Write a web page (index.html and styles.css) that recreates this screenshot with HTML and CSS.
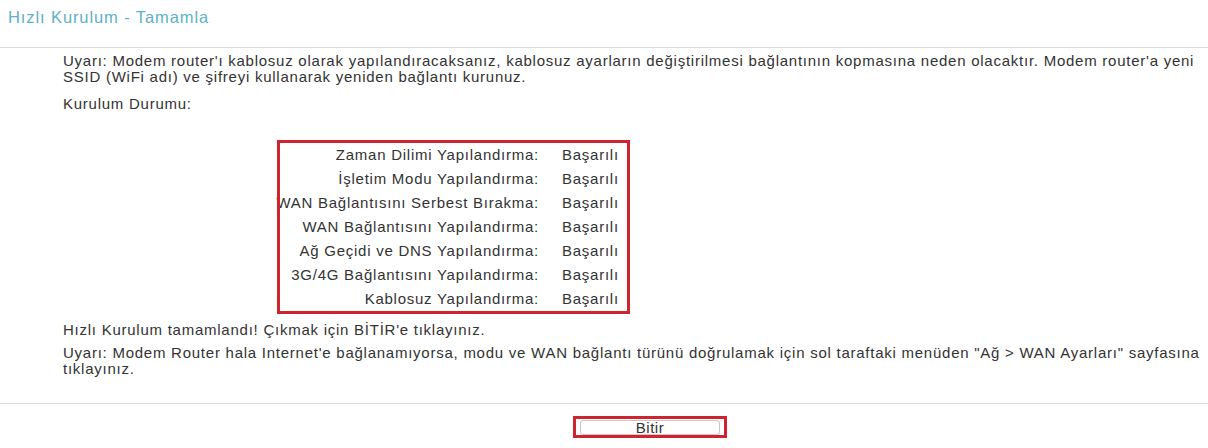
FILE: index.html
```html
<!DOCTYPE html>
<html lang="tr">
<head>
    <meta charset="UTF-8">
    <meta name="viewport" content="width=device-width, initial-scale=1.0">
    <title>Hızlı Kurulum - Tamamla</title>
    <link rel="stylesheet" href="styles.css">
</head>
<body>
    <div class="page">
        <div class="page-title">Hızlı Kurulum - Tamamla</div>

        <div class="content">
            <p class="note">Uyarı: Modem router'ı kablosuz olarak yapılandıracaksanız, kablosuz ayarların değiştirilmesi bağlantının kopmasına neden olacaktır. Modem router'a yeni SSID (WiFi adı) ve şifreyi kullanarak yeniden bağlantı kurunuz.</p>

            <p class="section-label">Kurulum Durumu:</p>

            <div class="highlight status-box">
                <div class="status-row">
                    <span class="status-name">Zaman Dilimi Yapılandırma:</span>
                    <span class="status-value">Başarılı</span>
                </div>
                <div class="status-row">
                    <span class="status-name">İşletim Modu Yapılandırma:</span>
                    <span class="status-value">Başarılı</span>
                </div>
                <div class="status-row">
                    <span class="status-name">WAN Bağlantısını Serbest Bırakma:</span>
                    <span class="status-value">Başarılı</span>
                </div>
                <div class="status-row">
                    <span class="status-name">WAN Bağlantısını Yapılandırma:</span>
                    <span class="status-value">Başarılı</span>
                </div>
                <div class="status-row">
                    <span class="status-name">Ağ Geçidi ve DNS Yapılandırma:</span>
                    <span class="status-value">Başarılı</span>
                </div>
                <div class="status-row">
                    <span class="status-name">3G/4G Bağlantısını Yapılandırma:</span>
                    <span class="status-value">Başarılı</span>
                </div>
                <div class="status-row">
                    <span class="status-name">Kablosuz Yapılandırma:</span>
                    <span class="status-value">Başarılı</span>
                </div>
            </div>

            <p class="done">Hızlı Kurulum tamamlandı! Çıkmak için BİTİR'e tıklayınız.</p>
            <p class="note">Uyarı: Modem Router hala Internet'e bağlanamıyorsa, modu ve WAN bağlantı türünü doğrulamak için sol taraftaki menüden "Ağ &gt; WAN Ayarları" sayfasına tıklayınız.</p>
        </div>

        <div class="footer">
            <div class="highlight finish-wrap">
                <button class="finish-button">Bitir</button>
            </div>
        </div>
    </div>
</body>
</html>
```

FILE: styles.css
```css
:root {
    --title-color: #5fb1c8;
    --text-color: #333;
    --line-color: #dcdcdc;
    --mark-color: #cf2330;
}

* {
    box-sizing: border-box;
    margin: 0;
    padding: 0;
}

body {
    font-family: 'Liberation Sans', Arial, sans-serif;
    font-size: 15px;
    letter-spacing: 0.75px;
    line-height: 16px;
    color: var(--text-color);
    background-color: #fff;
    overflow: hidden;
}

.page {
    width: 1300px;
}

.page-title {
    height: 48px;
    padding: 8px 0 0 8px;
    font-size: 16.5px;
    letter-spacing: 0.9px;
    line-height: 18px;
    color: var(--title-color);
    border-bottom: 1px solid var(--line-color);
}

.content {
    padding: 5px 75px 0 63px;
}

.note {
    margin-bottom: 7px;
}

.section-label {
    margin-top: 11px;
}

/* kırmızı çerçeve, yazının üstüne çizilir */
.highlight {
    position: relative;
}

.highlight::after {
    content: "";
    position: absolute;
    top: 0;
    right: 0;
    bottom: 0;
    left: 0;
    border: 3px solid var(--mark-color);
    pointer-events: none;
}

.status-box {
    width: 353px;
    margin: 28px 0 0 214px;
    padding: 3px;
}

.status-row {
    display: flex;
    height: 24px;
    align-items: center;
    white-space: nowrap;
}

.status-name {
    display: flex;
    justify-content: flex-end;
    width: 259px;
    flex-shrink: 0;
}

.status-value {
    margin-left: 23px;
}

.done {
    margin-top: 8px;
    margin-bottom: 7px;
}

.footer {
    display: flex;
    justify-content: center;
    margin-top: 26px;
    border-top: 1px solid var(--line-color);
    padding-top: 12px;
}

.finish-wrap {
    display: flex;
    padding: 4px 7px 3px;
}

.finish-button {
    width: 140px;
    height: 15px;
    padding: 0;
    font-family: inherit;
    font-size: 15px;
    letter-spacing: 0.5px;
    line-height: 13px;
    color: var(--text-color);
    background-color: #fff;
    border: 1px solid #c8c8c8;
    border-radius: 3px;
}
```
